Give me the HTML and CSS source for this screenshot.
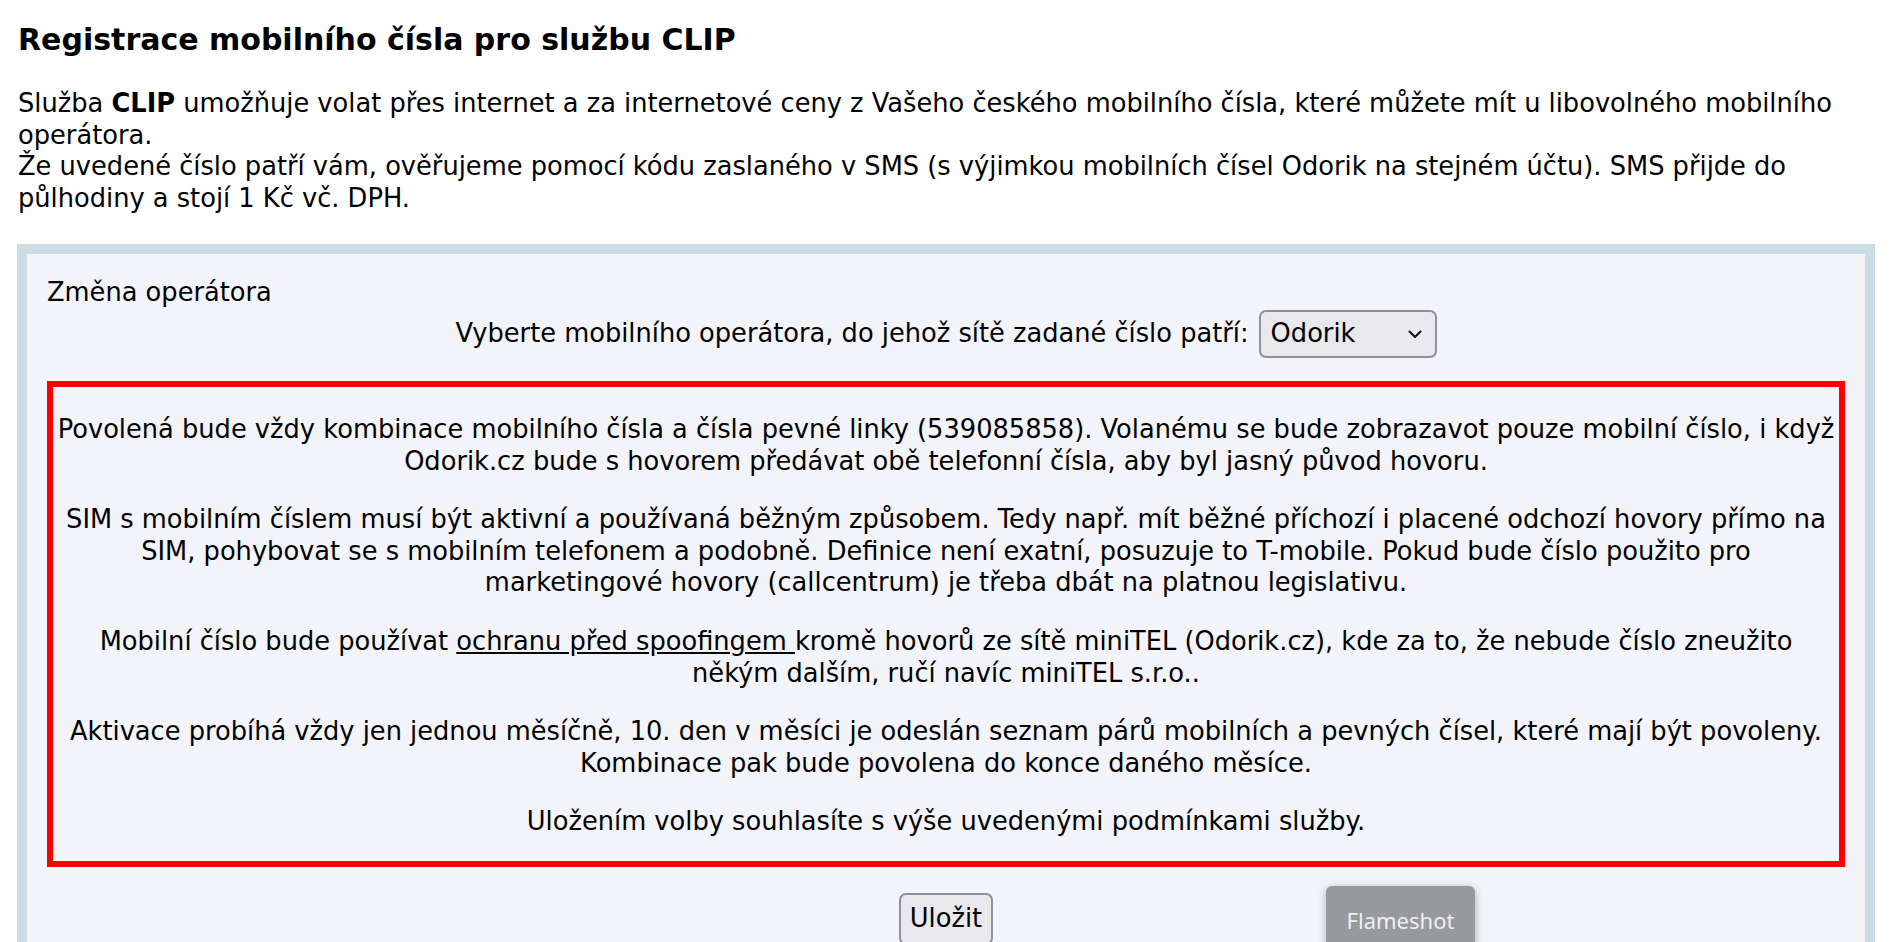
FILE: index.html
```html
<!DOCTYPE html>
<html lang="cs">
<head>
<meta charset="UTF-8">
<meta name="viewport" content="width=device-width, initial-scale=1.0">
<title>Registrace mobilního čísla pro službu CLIP</title>
<link rel="stylesheet" href="styles.css">
</head>
<body>

<h2 class="page-title">Registrace mobilního čísla pro službu CLIP</h2>

<p class="intro">
  Služba <strong>CLIP</strong> umožňuje volat přes internet a za internetové ceny z Vašeho českého mobilního čísla, které můžete mít u libovolného mobilního operátora.<br>
  Že uvedené číslo patří vám, ověřujeme pomocí kódu zaslaného v SMS (s výjimkou mobilních čísel Odorik na stejném účtu). SMS přijde do půlhodiny a stojí 1 Kč vč. DPH.
</p>

<div class="panel">
  <div class="panel-title">Změna operátora</div>

  <div class="operator-row">
    <label for="operator">Vyberte mobilního operátora, do jehož sítě zadané číslo patří:</label>
    <span class="select-wrap">
      <select id="operator">
        <option>Odorik</option>
        <option>O2</option>
        <option>T-Mobile</option>
        <option>Vodafone</option>
      </select>
      <svg class="chevron" width="14" height="9" viewBox="0 0 14 9"><path d="M1.5 1.5 L7 7 L12.5 1.5" fill="none" stroke="#111" stroke-width="2" stroke-linecap="round" stroke-linejoin="round"/></svg>
    </span>
  </div>

  <div class="notice">
    <p>Povolená bude vždy kombinace mobilního čísla a čísla pevné linky (539085858). Volanému se bude zobrazavot pouze mobilní číslo, i když Odorik.cz bude s hovorem předávat obě telefonní čísla, aby byl jasný původ hovoru.</p>
    <p>SIM s mobilním číslem musí být aktivní a používaná běžným způsobem. Tedy např. mít běžné příchozí i placené odchozí hovory přímo na SIM, pohybovat se s mobilním telefonem a podobně. Definice není exatní, posuzuje to T-mobile. Pokud bude číslo použito pro marketingové hovory (callcentrum) je třeba dbát na platnou legislativu.</p>
    <p>Mobilní číslo bude používat <a href="#">ochranu před spoofingem </a>kromě hovorů ze sítě miniTEL (Odorik.cz), kde za to, že nebude číslo zneužito někým dalším, ručí navíc miniTEL s.r.o..</p>
    <p>Aktivace probíhá vždy jen jednou měsíčně, 10. den v měsíci je odeslán seznam párů mobilních a pevných čísel, které mají být povoleny. Kombinace pak bude povolena do konce daného měsíce.</p>
    <p>Uložením volby souhlasíte s výše uvedenými podmínkami služby.</p>
  </div>

  <div class="actions">
    <button type="submit">Uložit</button>
  </div>
</div>

<div class="flameshot">Flameshot</div>

</body>
</html>
```

FILE: styles.css
```css
body {
  font-family: "DejaVu Sans", Verdana, sans-serif;
  font-size: 25.7px;
  line-height: 31.6px;
  color: #000;
  background: #fff;
  margin: 0 18px 0 17px;
}

.page-title {
  font-size: 30px;
  line-height: 35px;
  font-weight: bold;
  margin: 22px 0 31px 1px;
}

.intro {
  margin: 0 0 30px 1px;
}

.panel {
  background: #f2f4f9;
  border: 10px solid #ccdce3;
  padding: 23px 20px 0;
}

.operator-row {
  display: flex;
  justify-content: center;
  align-items: center;
  gap: 10px;
  margin-top: 1px;
}

.select-wrap {
  position: relative;
  display: inline-block;
}

select {
  appearance: none;
  -webkit-appearance: none;
  font: inherit;
  color: #000;
  width: 178px;
  height: 48px;
  padding: 0 40px 0 10px;
  background: #e9e9ed;
  border: 2px solid #8f8f9d;
  border-radius: 7px;
}

.chevron {
  position: absolute;
  right: 15px;
  top: 20px;
  pointer-events: none;
}

.notice {
  margin-top: 23px;
  border: 6px solid #ff0000;
  padding: 0 3px;
  text-align: center;
}

.notice p {
  margin: 27px 0;
}

.notice p:last-child {
  margin-bottom: 23px;
}

.notice a {
  color: #000;
  text-decoration: underline;
}

.actions {
  display: flex;
  justify-content: center;
  padding: 26px 0 20px;
}

button {
  font: inherit;
  color: #000;
  background: #e9e9ed;
  border: 2px solid #8f8f9d;
  border-radius: 7px;
  padding: 8px 9px;
}

.flameshot {
  position: absolute;
  left: 1326px;
  top: 886px;
  width: 149px;
  height: 70px;
  background: #98999c;
  border-radius: 6px;
  box-shadow: 0 2px 8px rgba(0, 0, 0, 0.3);
  color: #eef0f2;
  font-family: "Noto Sans", sans-serif;
  font-size: 22px;
  line-height: 68px;
  text-align: center;
}
```
